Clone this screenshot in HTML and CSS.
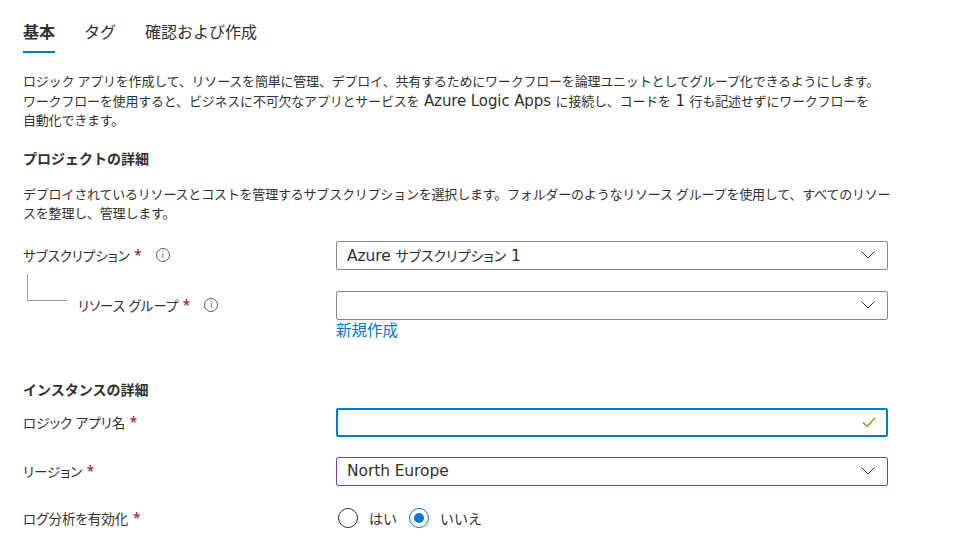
FILE: index.html
```html
<!DOCTYPE html>
<html lang="ja">
<head>
<meta charset="utf-8">
<link rel="stylesheet" href="styles.css">
</head>
<body>
<div class="page">
  <nav class="tabs">
    <span class="tab active">基本</span>
    <span class="tab">タグ</span>
    <span class="tab">確認および作成</span>
  </nav>

  <p class="intro">ロジック アプリを作成して、リソースを簡単に管理、デプロイ、共有するためにワークフローを論理ユニットとしてグループ化できるようにします。ワークフローを使用すると、ビジネスに不可欠なアプリとサービスを<span class="en"> Azure Logic Apps </span>に接続し、コードを<span class="en"> 1 </span>行も記述せずにワークフローを自動化できます。</p>

  <h2 class="section-title">プロジェクトの詳細</h2>
  <p class="desc">デプロイされているリソースとコストを管理するサブスクリプションを選択します。フォルダーのようなリソース グループを使用して、すべてのリソースを整理し、管理します。</p>

  <div class="row row-sub">
    <div class="label">サブスクリプション <span class="req">*</span><span class="info">i</span></div>
    <div class="control">
      <div class="select"><span class="value"><span class="en">Azure </span>サブスクリプション<span class="en"> 1</span></span><span class="chev"><svg width="14" height="8" viewBox="0 0 14 8"><path d="M0.5 0.5 L7 7 L13.5 0.5" fill="none" stroke="#323130" stroke-width="1"/></svg></span></div>
    </div>
  </div>

  <div class="row row-rg">
    <div class="label nested"><span class="tree"></span>リソース グループ <span class="req">*</span><span class="info">i</span></div>
    <div class="control">
      <div class="select"><span class="value"></span><span class="chev"><svg width="14" height="8" viewBox="0 0 14 8"><path d="M0.5 0.5 L7 7 L13.5 0.5" fill="none" stroke="#323130" stroke-width="1"/></svg></span></div>
      <a class="link">新規作成</a>
    </div>
  </div>

  <h2 class="section-title second">インスタンスの詳細</h2>

  <div class="row row-name">
    <div class="label">ロジック アプリ名 <span class="req">*</span></div>
    <div class="control">
      <div class="input focused"><span class="value"></span><span class="chev"><svg width="14" height="11" viewBox="0 0 14 11"><path d="M1 5.5 L5 9.5 L13 1" fill="none" stroke="#57a300" stroke-width="1.2"/></svg></span></div>
    </div>
  </div>

  <div class="row row-region">
    <div class="label">リージョン <span class="req">*</span></div>
    <div class="control">
      <div class="select purple"><span class="value en">North Europe</span><span class="chev"><svg width="14" height="8" viewBox="0 0 14 8"><path d="M0.5 0.5 L7 7 L13.5 0.5" fill="none" stroke="#323130" stroke-width="1"/></svg></span></div>
    </div>
  </div>

  <div class="row row-log">
    <div class="label">ログ分析を有効化 <span class="req">*</span></div>
    <div class="control radios">
      <span class="radio"></span><span class="radio-label">はい</span>
      <span class="radio checked"></span><span class="radio-label">いいえ</span>
    </div>
  </div>
</div>
</body>
</html>
```

FILE: styles.css
```css
* { box-sizing: border-box; }
body {
  margin: 0;
  background: #ffffff;
  color: #323130;
  font-family: "Open Sans", "Noto Sans CJK JP", sans-serif;
  font-size: 13px;
}
.page {
  padding: 0 0 0 23px;
  width: 900px;
}
.en {
  font-family: "DejaVu Sans", "Noto Sans CJK JP", sans-serif;
  font-size: 15px;
  letter-spacing: -0.1px;
}
.tabs {
  display: flex;
  gap: 29px;
  padding-top: 21px;
}
.tab {
  font-size: 16px;
  line-height: 22px;
  padding-bottom: 8px;
  border-bottom: 2px solid transparent;
  color: #323130;
}
.tab.active {
  font-weight: 700;
  border-bottom-color: #0078d4;
}
.intro, .desc {
  margin: 19px 0 0;
  line-height: 19.5px;
  width: 857px;
  letter-spacing: -0.2px;
}
.section-title {
  margin: 18px 0 0;
  font-size: 14px;
  line-height: 20px;
  font-weight: 700;
}
.desc {
  margin-top: 16px;
  width: 871px;
}
.section-title.second { margin-top: 40px; }
.row {
  display: grid;
  grid-template-columns: 313px 552px;
  align-items: start;
}
.row-sub { margin-top: 17px; }
.row-rg { margin-top: 21px; }
.row-name { margin-top: 8px; }
.row-region { margin-top: 20px; }
.row-log { margin-top: 18px; }
.label {
  display: flex;
  align-items: center;
  height: 29px;
  font-size: 13.5px;
  white-space: pre;
  font-feature-settings: "palt";
}
.label.nested {
  padding-left: 55px;
  position: relative;
}
.tree {
  position: absolute;
  left: 4px;
  top: -17px;
  width: 40px;
  height: 27px;
  border-left: 1px solid #a19f9d;
  border-bottom: 1px solid #a19f9d;
}
.req {
  color: #a4262c;
  font-weight: 600;
  margin-left: 1px;
}
.info {
  display: inline-flex;
  align-items: center;
  justify-content: center;
  width: 14px;
  height: 14px;
  margin-left: 14px;
  border: 1px solid #605e5c;
  border-radius: 50%;
  font-size: 9px;
  line-height: 1;
  color: #605e5c;
  font-family: "DejaVu Sans", sans-serif;
}
.select, .input {
  display: flex;
  align-items: center;
  justify-content: space-between;
  height: 29px;
  border: 1px solid #8a8886;
  border-radius: 2px;
  padding: 0 12px 0 10px;
  font-size: 14px;
  font-feature-settings: "palt";
  background: #fff;
}
.select .en { font-size: 15.5px; }
.select.purple { border-color: #8a3aa8; }
.input.focused {
  border: 2px solid #0078d4;
  padding: 0 10px 0 9px;
}
.chev { display: flex; align-items: center; }
.link {
  display: block;
  color: #0078d4;
  font-size: 15.5px;
  line-height: 20px;
}
.radios {
  display: flex;
  align-items: center;
  height: 29px;
  padding-left: 2px;
  font-size: 14px;
}
.radio {
  width: 20px;
  height: 20px;
  border: 1px solid #323130;
  border-radius: 50%;
  display: inline-flex;
  align-items: center;
  justify-content: center;
}
.radio.checked { border-color: #0078d4; }
.radio.checked::after {
  content: "";
  width: 10px;
  height: 10px;
  border-radius: 50%;
  background: #0078d4;
}
.radio-label {
  margin: 0 12px 0 11px;
}
```
